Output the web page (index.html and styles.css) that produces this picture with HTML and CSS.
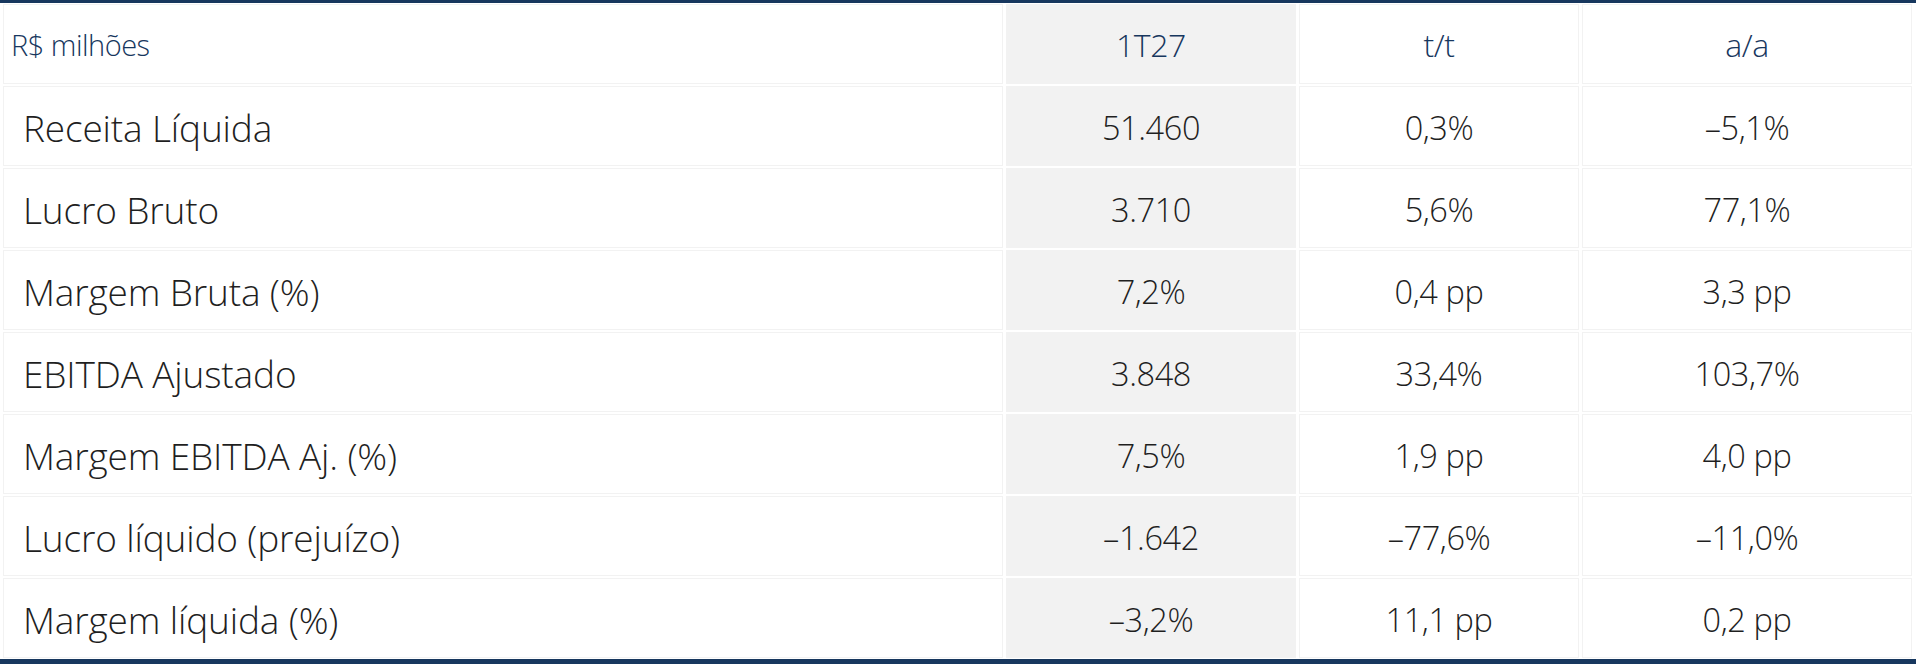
FILE: index.html
```html
<!DOCTYPE html>
<html lang="pt-BR">
<head>
<meta charset="utf-8">
<title>Destaques</title>
<link rel="stylesheet" href="styles.css">
</head>
<body>
<div class="table">
  <div class="cell head label unit">R$ milhões</div>
  <div class="cell head hl">1T27</div>
  <div class="cell head">t/t</div>
  <div class="cell head">a/a</div>

  <div class="cell label">Receita Líquida</div>
  <div class="cell hl">51.460</div>
  <div class="cell">0,3%</div>
  <div class="cell">–5,1%</div>

  <div class="cell label">Lucro Bruto</div>
  <div class="cell hl">3.710</div>
  <div class="cell">5,6%</div>
  <div class="cell">77,1%</div>

  <div class="cell label">Margem Bruta (%)</div>
  <div class="cell hl">7,2%</div>
  <div class="cell">0,4 pp</div>
  <div class="cell">3,3 pp</div>

  <div class="cell label">EBITDA Ajustado</div>
  <div class="cell hl">3.848</div>
  <div class="cell">33,4%</div>
  <div class="cell">103,7%</div>

  <div class="cell label">Margem EBITDA Aj. (%)</div>
  <div class="cell hl">7,5%</div>
  <div class="cell">1,9 pp</div>
  <div class="cell">4,0 pp</div>

  <div class="cell label">Lucro líquido (prejuízo)</div>
  <div class="cell hl">–1.642</div>
  <div class="cell">–77,6%</div>
  <div class="cell">–11,0%</div>

  <div class="cell label">Margem líquida (%)</div>
  <div class="cell hl">–3,2%</div>
  <div class="cell">11,1 pp</div>
  <div class="cell">0,2 pp</div>
</div>
</body>
</html>
```
FILE: styles.css
```css
html, body {
  margin: 0;
  padding: 0;
  background: #ffffff;
}

body {
  font-family: "Open Sans", "Noto Sans", sans-serif;
  font-weight: 300;
  color: #1f1f1f;
}

.table {
  width: 1916px;
  box-sizing: border-box;
  border-top: 3px solid #17375e;
  border-bottom: 5px solid #17375e;
  padding: 1px 4px 1px 3px;
  display: grid;
  grid-template-columns: 1000px 290px 280px 1fr;
  grid-auto-rows: 80px;
  column-gap: 3px;
  row-gap: 2px;
}

.cell {
  box-sizing: border-box;
  background: #ffffff;
  border: 1px solid #f2f2f2;
  display: flex;
  align-items: center;
  justify-content: center;
  font-size: 32.5px;
  letter-spacing: -0.4px;
  padding-top: 2px;
}

.cell.hl {
  background: #f2f2f2;
  border-color: #f2f2f2;
}

.cell.label {
  justify-content: flex-start;
  padding-left: 19px;
  font-size: 37px;
  letter-spacing: -0.15px;
}

.cell.head {
  color: #17375e;
  font-size: 32px;
  padding-top: 0;
}

.cell.head.unit {
  font-size: 29px;
  padding-left: 7px;
  letter-spacing: -0.5px;
}
```
